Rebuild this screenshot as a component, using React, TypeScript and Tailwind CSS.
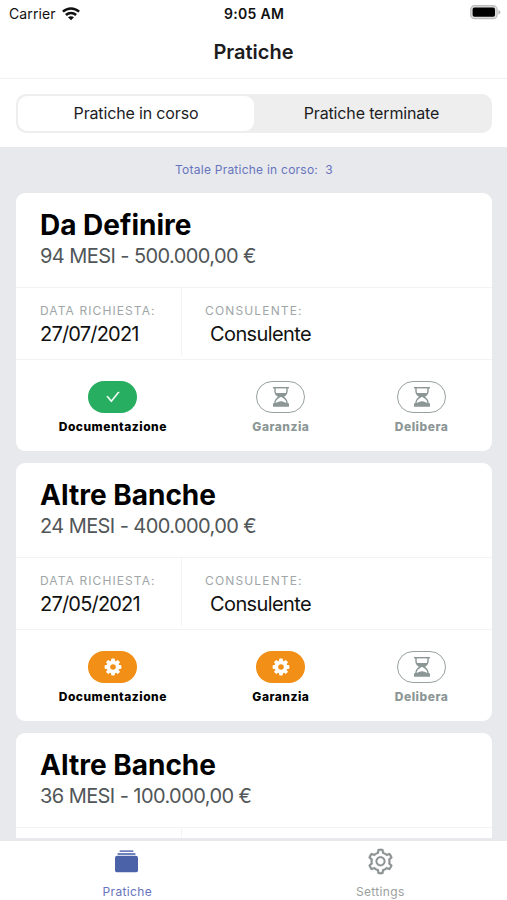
import clsx from "clsx";
import { AiOutlineCheck, AiOutlineSetting } from "react-icons/ai";

type StepState = "done" | "working" | "waiting";

interface Pratica {
  id: number;
  title: string;
  summary: string;
  date: string;
  consultant: string;
  steps: { label: string; state: StepState }[];
}

const pratiche: Pratica[] = [
  {
    id: 1,
    title: "Da Definire",
    summary: "94 MESI - 500.000,00 €",
    date: "27/07/2021",
    consultant: "Consulente",
    steps: [
      { label: "Documentazione", state: "done" },
      { label: "Garanzia", state: "waiting" },
      { label: "Delibera", state: "waiting" },
    ],
  },
  {
    id: 2,
    title: "Altre Banche",
    summary: "24 MESI - 400.000,00 €",
    date: "27/05/2021",
    consultant: "Consulente",
    steps: [
      { label: "Documentazione", state: "working" },
      { label: "Garanzia", state: "working" },
      { label: "Delibera", state: "waiting" },
    ],
  },
  {
    id: 3,
    title: "Altre Banche",
    summary: "36 MESI - 100.000,00 €",
    date: "",
    consultant: "",
    steps: [],
  },
];

function WifiIcon() {
  return (
    <svg width="18" height="14" viewBox="0 0 18 14" fill="none" stroke="#111" strokeWidth="2.5">
      <path d="M.9 4.6C5.6.3 12.4.3 17.1 4.6" />
      <path d="M3.9 8c2.900-2.700 7.300-2.700 10.200 0" />
      <path d="M9 13.300 6 10.300c1.700-1.500 4.300-1.500 6 0z" fill="#111" stroke="none" />
    </svg>
  );
}

function BatteryIcon() {
  return (
    <svg width="31" height="15" viewBox="0 0 31 15" fill="none">
      <rect x="0.7" y="0.7" width="26.4" height="13" rx="3.8" fill="#dcdcdc" stroke="#bdbdbd" strokeWidth="1.2" />
      <rect x="2.6" y="2.6" width="22.4" height="9.2" rx="1.8" fill="#000" />
      <path d="M28.4 5v4.600c1.500-.6 2-1.400 2-2.300s-.5-1.700-2-2.300z" fill="#b5b5b5" />
    </svg>
  );
}

function HourglassIcon() {
  return (
    <svg width="18" height="20" viewBox="0 0 18 20" fill="none">
      <path d="M1 .7h16" stroke="#8b9695" strokeWidth="1.4" />
      <path
        d="M3 1v3.200c0 3 2.200 4.400 4.500 5.600C5.200 11 3 12.800 3 15.800V19M15 1v3.200c0 3-2.200 4.400-4.500 5.600 2.300 1.200 4.500 3 4.500 6V19"
        stroke="#8b9695"
        strokeWidth="1.4"
      />
      <path d="M3.300 6h11.400c-.6 1.900-2.200 2.900-4.100 4H7.400c-1.900-1.100-3.500-2.100-4.100-4z" fill="#8b9695" />
      <path d="M2.600 16c2.400 0 4.400-1.700 6.400-1.700s4 1.700 6.400 1.700L17 16.400v3.400H1v-3.400z" fill="#8b9695" />
    </svg>
  );
}

function CogIcon() {
  return (
    <svg width="18" height="18" viewBox="-9 -9 18 18">
      <g fill="#fff">
        <rect x="-1.9" y="-8.4" width="3.8" height="16.8" rx="1" />
        <rect x="-1.9" y="-8.4" width="3.8" height="16.8" rx="1" transform="rotate(45)" />
        <rect x="-1.9" y="-8.4" width="3.8" height="16.8" rx="1" transform="rotate(90)" />
        <rect x="-1.9" y="-8.4" width="3.8" height="16.8" rx="1" transform="rotate(135)" />
        <circle r="6.4" />
      </g>
      <circle r="2.8" fill="#f28f16" />
    </svg>
  );
}

function AlbumsIcon() {
  return (
    <svg width="25" height="25" viewBox="0 0 25 25" fill="#4b62a9">
      <rect x="0" y="6.3" width="25" height="18" rx="2.4" />
      <rect x="2.7" y="3.3" width="19.6" height="2" rx="0.6" opacity="0.8" />
      <rect x="5" y="0.2" width="15" height="2" rx="0.6" opacity="0.8" />
    </svg>
  );
}

function Step({ label, state }: { label: string; state: StepState }) {
  return (
    <div className="flex flex-col items-center">
      <div
        className={clsx(
          "flex h-8 w-[49px] items-center justify-center rounded-full",
          state === "done" && "bg-[#27ae60]",
          state === "working" && "bg-[#f28f16]",
          state === "waiting" && "border-[1.5px] border-[#98a1a0]"
        )}
      >
        {state === "done" && <AiOutlineCheck size={16} color="#fff" stroke="#fff" strokeWidth={25} />}
        {state === "working" && <CogIcon />}
        {state === "waiting" && <HourglassIcon />}
      </div>
      <span
        className={clsx(
          "mt-[5px] text-[12px] leading-[17px] font-extrabold tracking-[0.5px]",
          state === "waiting" ? "text-[#8b9695]" : "text-black"
        )}
      >
        {label}
      </span>
    </div>
  );
}

function PraticaCard({ pratica }: { pratica: Pratica }) {
  return (
    <article className="h-[258px] shrink-0 rounded-[9px] bg-white">
      <div className="h-[95px] border-b border-[#f2f3f4] pt-[15px] pl-[24px]">
        <h2 className="text-[28px] leading-[34px] font-bold text-black">{pratica.title}</h2>
        <p className="mt-px text-[20px] leading-[26px] tracking-[-0.58px] text-[#515658]">{pratica.summary}</p>
      </div>
      <div className="flex h-[72px] border-b border-[#f2f3f4]">
        <div className="mb-[3px] w-[166px] border-r border-[#f2f3f4] pt-[15px] pl-[24px]">
          {pratica.date && (
            <>
              <p className="text-[12px] leading-[16px] tracking-[1.1px] text-[#a0a6a7]">DATA RICHIESTA:</p>
              <p className="mt-[2px] text-[20px] leading-[26px] tracking-[-0.8px] text-[#111]">{pratica.date}</p>
            </>
          )}
        </div>
        <div className="pt-[15px] pl-[23px]">
          {pratica.consultant && (
            <>
              <p className="text-[12px] leading-[16px] tracking-[1.15px] text-[#a0a6a7]">CONSULENTE:</p>
              <p className="mt-[2px] pl-[5px] text-[20px] leading-[26px] tracking-[-0.6px] text-[#111]">
                {pratica.consultant}
              </p>
            </>
          )}
        </div>
      </div>
      <div className="flex justify-around pt-[21px] pr-px">
        {pratica.steps.map((step) => (
          <Step key={step.label} label={step.label} state={step.state} />
        ))}
      </div>
    </article>
  );
}

export default function App() {
  return (
    <div className="flex h-[900px] w-[507px] flex-col overflow-hidden bg-white font-['Inter',sans-serif]">
      {/* Status bar */}
      <div className="grid h-7 shrink-0 grid-cols-3 items-center pr-[6px] pl-[9px] text-[14px] text-[#111]">
        <div className="-mt-px flex items-center gap-[6px]">
          <span className="tracking-[0.1px]">Carrier</span>
          <WifiIcon />
        </div>
        <span className="-mt-px pr-[2px] text-center font-semibold tracking-[0.3px]">9:05 AM</span>
        <div className="-mt-[3px] flex justify-end">
          <BatteryIcon />
        </div>
      </div>

      <header className="flex h-[51px] shrink-0 items-center justify-center border-b border-[#f0f0f1] pb-[2px]">
        <h1 className="text-[20px] font-semibold text-[#1c1c1e]">Pratiche</h1>
      </header>

      {/* Segmented control */}
      <div className="h-[68px] shrink-0 pt-[15px] pr-[15px] pl-4">
        <div className="flex h-[39px] rounded-[10px] bg-[#eeeeef] p-[2px] text-[16px] tracking-[-0.15px] text-[#1c1c1e]">
          <button type="button" className="w-[236px] rounded-[9px] bg-white pb-px">
            Pratiche in corso
          </button>
          <button type="button" className="flex-1 pr-px pb-px">
            Pratiche terminate
          </button>
        </div>
      </div>

      <main className="flex min-h-0 flex-1 flex-col overflow-hidden bg-[#e7e9ed] pr-[15px] pl-4">
        <p className="h-[46px] shrink-0 pt-[13px] text-center text-[12px] leading-[20px] tracking-[0.24px] whitespace-pre text-[#6774bd]">
          {"Totale Pratiche in corso:  3"}
        </p>
        <div className="flex min-h-0 flex-1 flex-col gap-3 overflow-hidden">
          {pratiche.map((pratica) => (
            <PraticaCard key={pratica.id} pratica={pratica} />
          ))}
        </div>
      </main>

      <nav className="flex h-[62px] shrink-0 border-t-[3px] border-[#e7e9ed] bg-white text-[12px] tracking-[0.35px]">
        <div className="flex flex-1 flex-col items-center pt-[9px] text-[#6774bd]">
          <AlbumsIcon />
          <span className="mt-[11px] pl-px leading-[16px]">Pratiche</span>
        </div>
        <div className="flex flex-1 flex-col items-center pt-[6px] text-[#8e9494]">
          <AiOutlineSetting size={31} stroke="#8e9494" strokeWidth={6} />
          <span className="mt-[8px] leading-[16px] text-[#9b9fa0]">Settings</span>
        </div>
      </nav>
    </div>
  );
}
